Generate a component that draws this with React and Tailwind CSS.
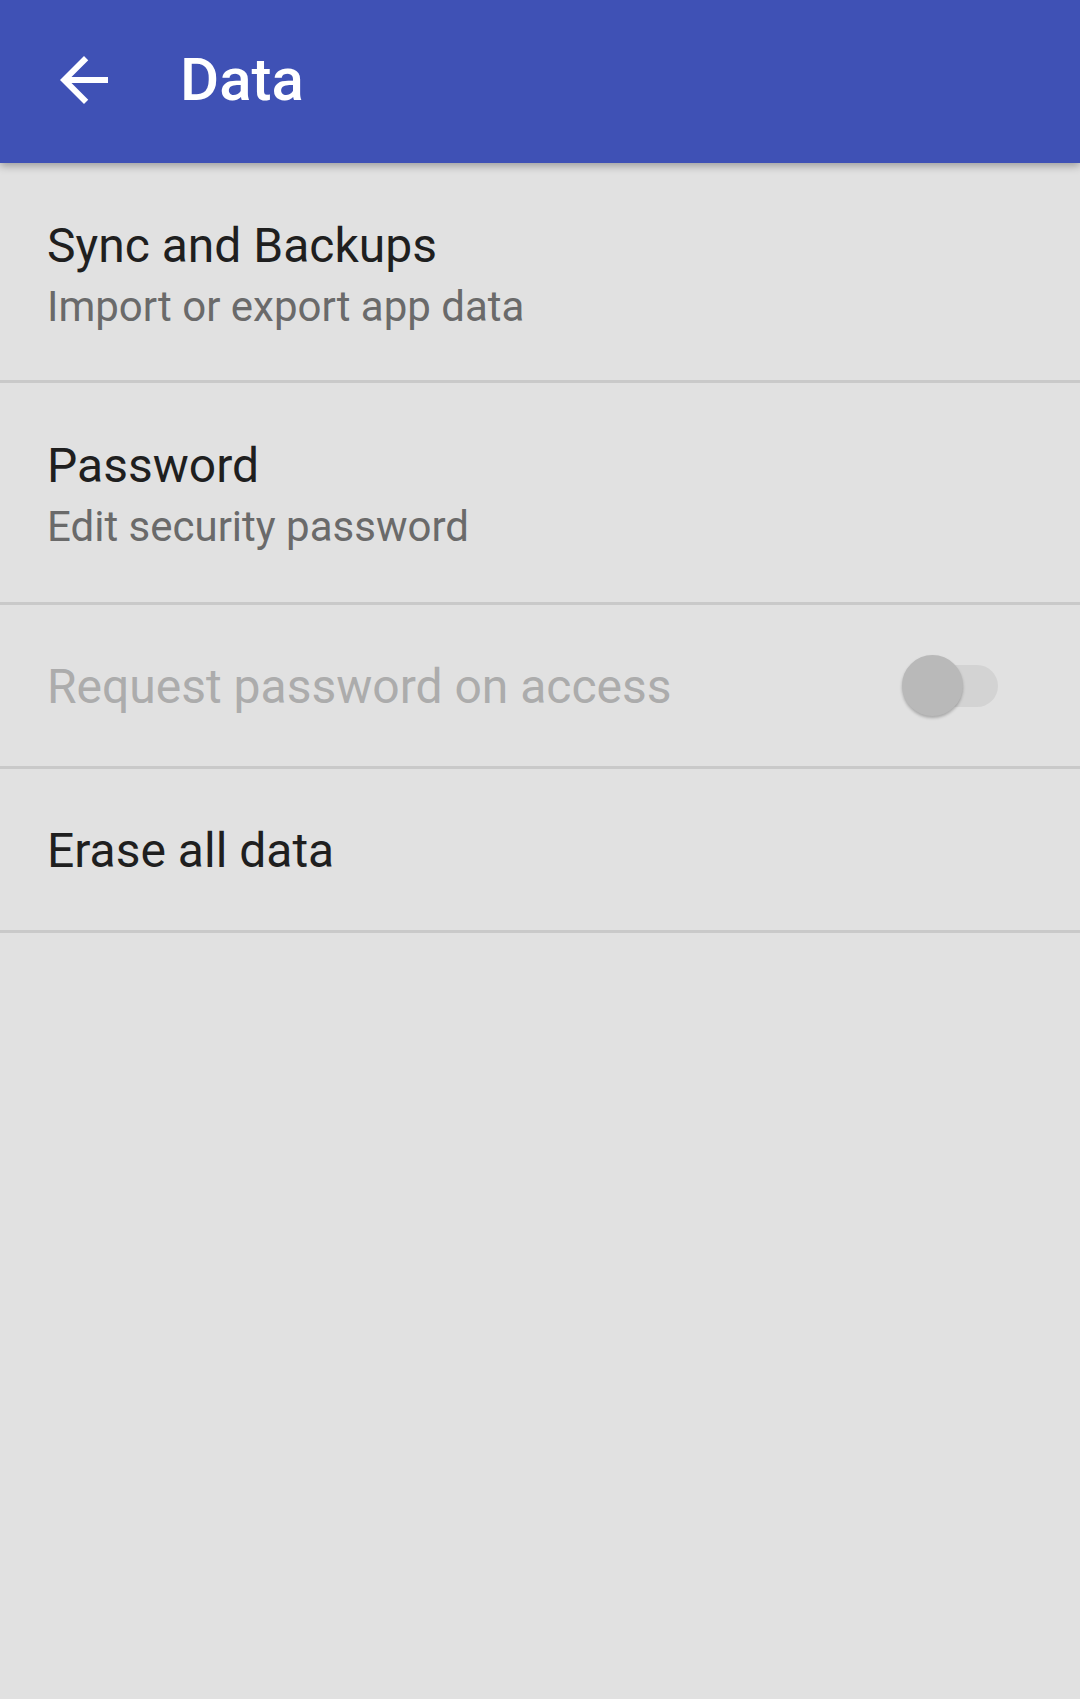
import React from "react";

/**
 * Data settings screen
 * Toolbar with back arrow and a list of preferences
 */
function ArrowBack() {
    return (
        <svg viewBox="0 0 24 24" className="w-[72px] h-[72px]" fill="#ffffff">
            <path d="M20 11H7.83l5.59-5.59L12 4l-8 8 8 8 1.41-1.41L7.83 13H20v-2z" />
        </svg>
    );
}

function Divider() {
    return <div className="h-[3px] bg-[#c9c9c9]" />;
}

function TwoLineRow({ title, summary, height }) {
    return (
        <div className={`${height} pl-[47px] pt-[55px]`}>
            <div className="text-[48px] leading-[56px] text-[#1f1f1f]">{title}</div>
            <div className="mt-[3px] text-[42px] leading-[60px] text-[#6a6a6a]">{summary}</div>
        </div>
    );
}

function SwitchOff() {
    return (
        <div className="relative w-[102px] h-[62px] flex items-center justify-end">
            <div className="w-[88px] h-[42px] rounded-full bg-[#d3d3d3]" />
            {/* Thumb */}
            <div className="absolute left-[6px] top-0 w-[61px] h-[61px] rounded-full bg-[#b9b9b9] shadow-[0_2px_3px_rgba(0,0,0,0.25)]" />
        </div>
    );
}

export default function App() {
    return (
        <div
            className="min-h-screen bg-[#e1e1e1]"
            style={{ fontFamily: "Roboto, 'Noto Sans', sans-serif" }}
        >
            {/* Toolbar */}
            <div className="relative z-10 h-[163px] bg-[#3f51b5] flex items-center shadow-[0_3px_8px_rgba(0,0,0,0.3)]">
                <div className="ml-[48px] -mt-[4px]">
                    <ArrowBack />
                </div>
                <h1 className="ml-[60px] text-[60px] leading-[72px] font-medium text-white -mt-[4px]">Data</h1>
            </div>

            {/* Preferences */}
            <TwoLineRow title="Sync and Backups" summary="Import or export app data" height="h-[217px]" />
            <Divider />
            <TwoLineRow title="Password" summary="Edit security password" height="h-[219px]" />
            <Divider />
            <div className="h-[161px] pl-[47px] pr-[82px] flex items-center justify-between">
                <span className="text-[48px] leading-[56px] text-[#acacac] pt-[3px]">Request password on access</span>
                <SwitchOff />
            </div>
            <Divider />
            <div className="h-[161px] pl-[47px] flex items-center">
                <span className="text-[48px] leading-[56px] text-[#1f1f1f] pt-[3px]">Erase all data</span>
            </div>
            <Divider />
        </div>
    );
}
